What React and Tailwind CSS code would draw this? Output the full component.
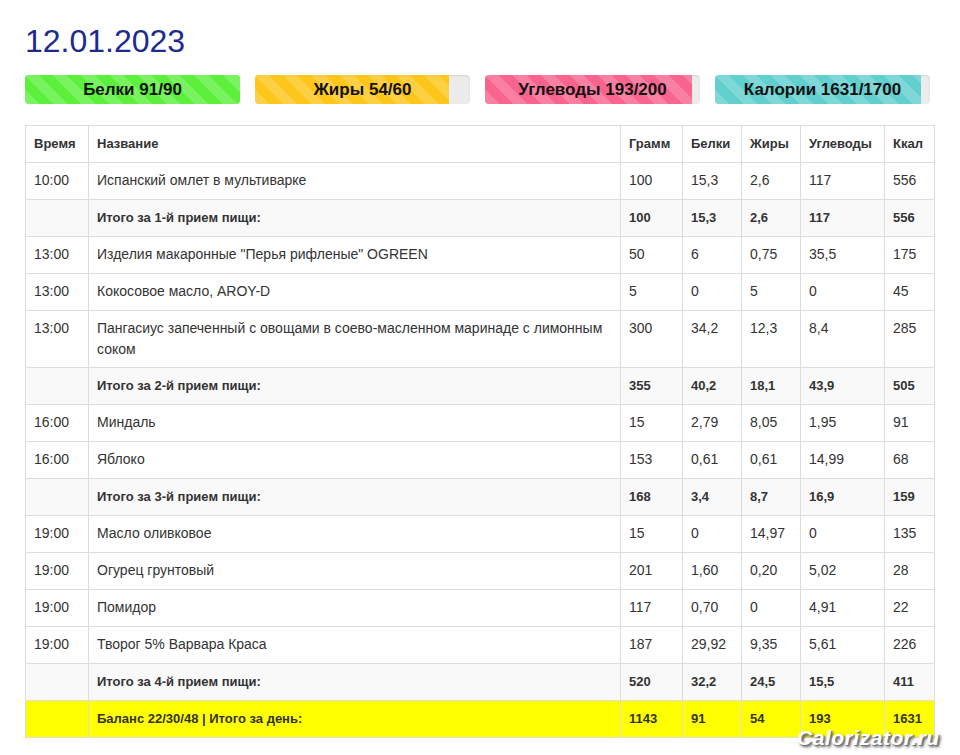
const bars = [
  { label: "Белки 91/90", pct: 100, color: "#5cf03c" },
  { label: "Жиры 54/60", pct: 90, color: "#fdc61a" },
  { label: "Углеводы 193/200", pct: 96.5, color: "#f9648f" },
  { label: "Калории 1631/1700", pct: 96, color: "#62cfcf" },
];

const rows = [
  ["10:00", "Испанский омлет в мультиварке", "100", "15,3", "2,6", "117", "556"],
  ["", "Итого за 1-й прием пищи:", "100", "15,3", "2,6", "117", "556", "b"],
  ["13:00", 'Изделия макаронные "Перья рифленые" OGREEN', "50", "6", "0,75", "35,5", "175"],
  ["13:00", "Кокосовое масло, AROY-D", "5", "0", "5", "0", "45"],
  ["13:00", "Пангасиус запеченный с овощами в соево-масленном маринаде с лимонным соком", "300", "34,2", "12,3", "8,4", "285"],
  ["", "Итого за 2-й прием пищи:", "355", "40,2", "18,1", "43,9", "505", "b"],
  ["16:00", "Миндаль", "15", "2,79", "8,05", "1,95", "91"],
  ["16:00", "Яблоко", "153", "0,61", "0,61", "14,99", "68"],
  ["", "Итого за 3-й прием пищи:", "168", "3,4", "8,7", "16,9", "159", "b"],
  ["19:00", "Масло оливковое", "15", "0", "14,97", "0", "135"],
  ["19:00", "Огурец грунтовый", "201", "1,60", "0,20", "5,02", "28"],
  ["19:00", "Помидор", "117", "0,70", "0", "4,91", "22"],
  ["19:00", "Творог 5% Варвара Краса", "187", "29,92", "9,35", "5,61", "226"],
  ["", "Итого за 4-й прием пищи:", "520", "32,2", "24,5", "15,5", "411", "b"],
  ["", "Баланс 22/30/48 | Итого за день:", "1143", "91", "54", "193", "1631", "y"],
];

const widths = ["w-[63px]", "", "w-[62px]", "w-[59px]", "w-[59px]", "w-[84px]", "w-[50px]"];

export default function App() {
  return (
    <div className="bg-white w-[960px] h-[755px] overflow-hidden relative" style={{ fontFamily: "'Liberation Sans', Arial, sans-serif" }}>
      <div className="px-[25px] pt-[22px]">
        <h1 className="text-[32px] leading-[38px] text-[#1d2b8f]">12.01.2023</h1>
        <div className="flex gap-[15px] mt-[15px]">
          {bars.map((b) => (
            <div key={b.label} className="w-[215px] h-[29px] rounded bg-[#ececec] overflow-hidden relative shadow-[inset_0_1px_2px_rgba(0,0,0,0.1)]">
              <div
                className="h-full bg-[repeating-linear-gradient(45deg,rgba(255,255,255,0.18)_0,rgba(255,255,255,0.18)_10px,transparent_10px,transparent_20px)]"
                style={{ width: b.pct + "%", backgroundColor: b.color }}
              />
              <div className="absolute inset-0 flex items-center justify-center text-[17px] font-bold text-[#111]">{b.label}</div>
            </div>
          ))}
        </div>
        <table className="mt-[21px] w-[910px] border-collapse text-[14px] text-[#333]">
          <thead>
            <tr className="h-[37px]">
              {["Время", "Название", "Грамм", "Белки", "Жиры", "Углеводы", "Ккал"].map((h, i) => (
                <th key={h} className={`border border-[#ddd] px-2 text-left font-bold text-[13px] ${widths[i]}`}>{h}</th>
              ))}
            </tr>
          </thead>
          <tbody>
            {rows.map((r, i) => {
              const bold = r[7] === "b" || r[7] === "y";
              const bg = r[7] === "y" ? "bg-[#ffff00]" : r[7] === "b" ? "bg-[#f9f9f9]" : "bg-white";
              return (
                <tr key={i} className={`${bg} ${r[4] === "12,3" ? "h-[57px]" : "h-[37px]"}`}>
                  {r.slice(0, 7).map((c, j) => (
                    <td key={j} className={`border border-[#ddd] px-2 py-[7px] align-top leading-[21px] ${bold ? "font-bold text-[13px]" : ""} ${j === 1 && !bold ? "pr-3" : ""}`}>{c}</td>
                  ))}
                </tr>
              );
            })}
          </tbody>
        </table>
      </div>
      <div className="absolute left-[797px] top-[722px] text-[21px] font-bold italic text-white tracking-wide [text-shadow:1px_1px_0_#777,2px_2px_3px_#444]">Calorizator.ru</div>
    </div>
  );
}
